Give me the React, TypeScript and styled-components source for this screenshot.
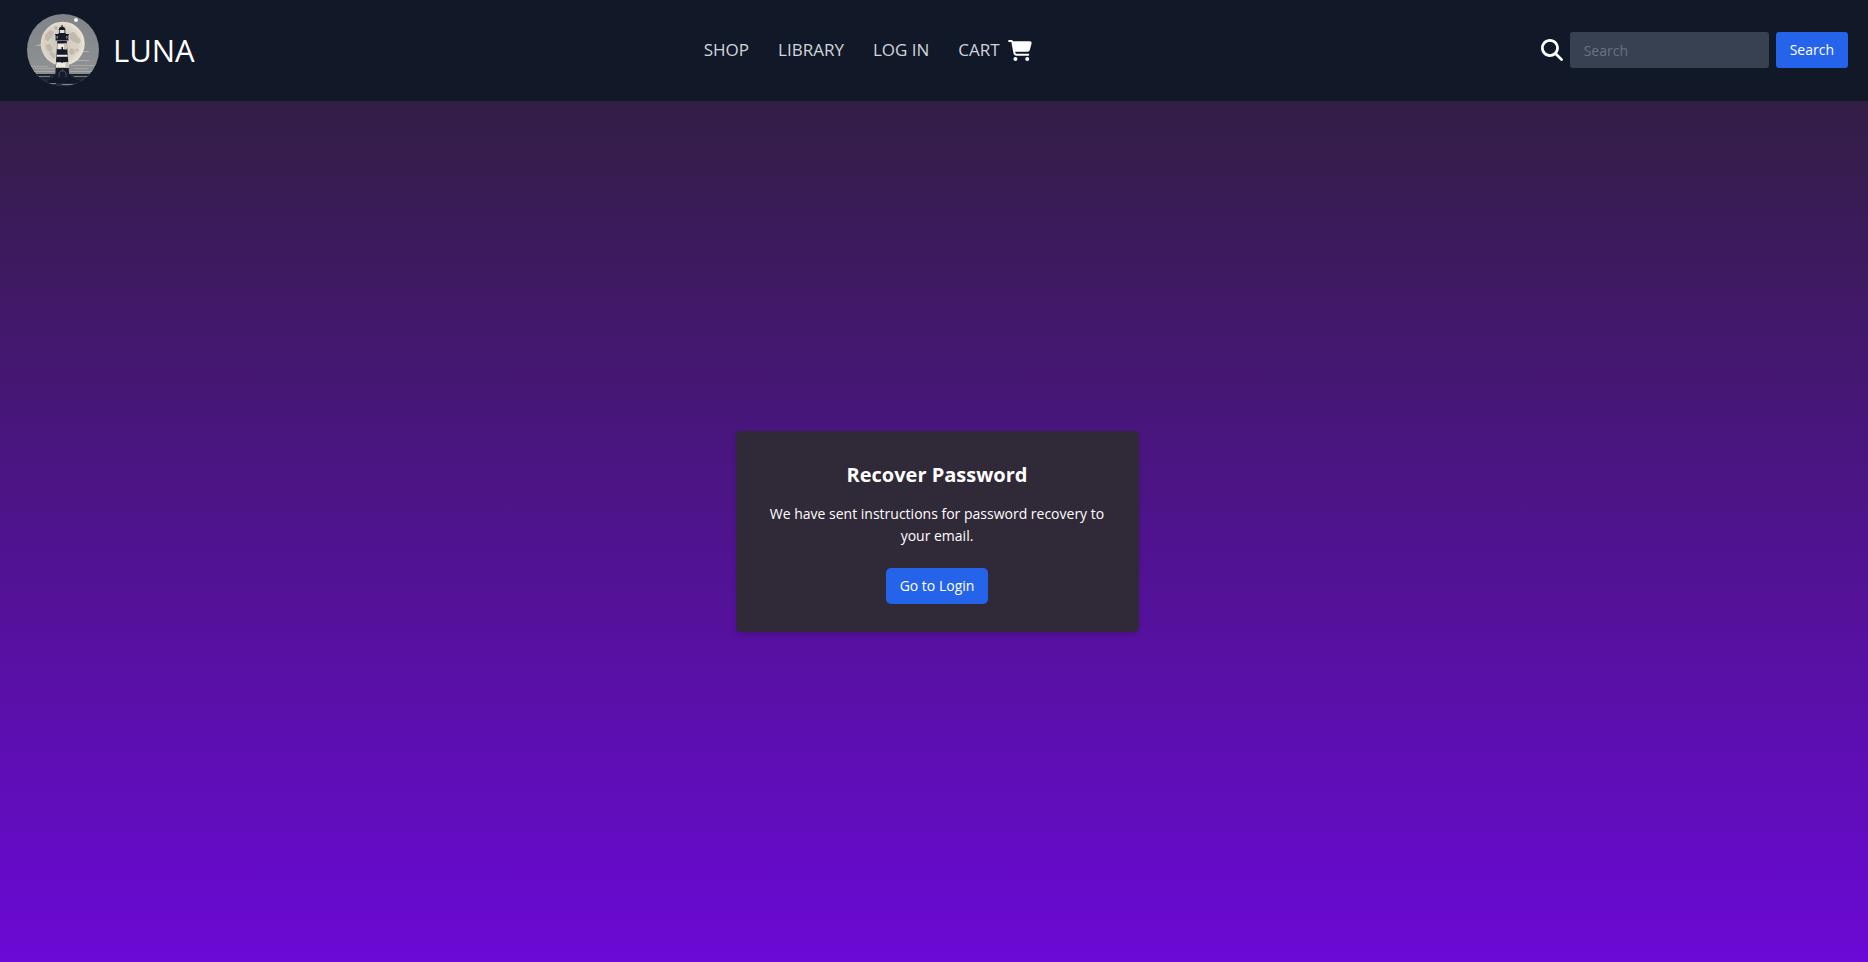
import React from "react";
import styled, { createGlobalStyle } from "styled-components";
import { FaMagnifyingGlass, FaCartShopping } from "react-icons/fa6";

const GlobalStyle = createGlobalStyle`
  *, *::before, *::after { box-sizing: border-box; }
  body {
    margin: 0;
    font-family: "Segoe UI", "Open Sans", "Noto Sans", sans-serif;
    font-size: 14px;
    line-height: 22px;
    color: #ffffff;
    background: #6b09d6;
  }
  h1, p { margin: 0; }
  a { color: inherit; text-decoration: none; }
  button, input { font: inherit; border: 0; }
`;

const Page = styled.div`
  display: flex;
  flex-direction: column;
  min-height: 100vh;
`;

const Header = styled.header`
  display: flex;
  align-items: center;
  justify-content: space-between;
  padding: 14px 20px 15px 27px;
  background: #111827;
`;

const Brand = styled.a`
  display: flex;
  align-items: center;
  gap: 14px;
  font-size: 31px;
  line-height: 36px;
`;

const Logo = styled.svg`
  display: block;
  width: 72px;
  height: 72px;
`;

const Nav = styled.nav`
  display: flex;
  align-items: center;
  gap: 29px;
`;

const NavLink = styled.a`
  display: flex;
  align-items: center;
  gap: 8px;
  font-size: 17px;
  line-height: 24px;
  color: #d1d5db;

  svg {
    width: 24px;
    height: 21px;
    color: #ffffff;
  }
`;

const SearchForm = styled.form`
  display: flex;
  align-items: center;
  gap: 7px;
`;

const SearchLabel = styled.label`
  display: flex;

  svg {
    width: 22px;
    height: 22px;
  }
`;

const SearchInput = styled.input`
  width: 199px;
  height: 36px;
  padding: 0 14px;
  border-radius: 3px;
  color: #ffffff;
  background: #374151;

  &::placeholder { color: #6b7280; opacity: 1; }
`;

const Button = styled.button<{ $radius: number }>`
  height: 36px;
  padding: 0 14px;
  border-radius: ${({ $radius }) => $radius}px;
  color: #ffffff;
  background: #2563eb;
  cursor: pointer;
`;

const Main = styled.main`
  flex: 1;
  display: flex;
  align-items: center;
  justify-content: center;
  padding: 28px 28px 28px 34px;
  background: linear-gradient(to bottom, #331e45, #6b09d6);
`;

const Card = styled.section`
  display: flex;
  flex-direction: column;
  align-items: center;
  width: 100%;
  max-width: 403px;
  padding: 28px;
  border-radius: 5px;
  text-align: center;
  background: #302938;
  box-shadow: 0 4px 6px -1px rgba(0, 0, 0, 0.1), 0 2px 4px -2px rgba(0, 0, 0, 0.1);
`;

const Title = styled.h1`
  margin-bottom: 12px;
  font-size: 20px;
  line-height: 32px;
  font-weight: 700;
`;

const Message = styled.p`
  margin-bottom: 21px;
`;

function Lighthouse() {
  return (
    <Logo viewBox="0 0 72 72" role="img" aria-label="Lighthouse in front of the moon">
      <defs>
        <clipPath id="disc"><circle cx="36" cy="36" r="36" /></clipPath>
        <linearGradient id="sky" x1="0" y1="0" x2="0" y2="1">
          <stop offset="0" stopColor="#7f8488" />
          <stop offset="0.8" stopColor="#8f9294" />
          <stop offset="1" stopColor="#6d7177" />
        </linearGradient>
        <radialGradient id="moon" cx="0.45" cy="0.5" r="0.58">
          <stop offset="0" stopColor="#cfc7bb" />
          <stop offset="0.7" stopColor="#dad3c6" />
          <stop offset="1" stopColor="#f2ecdd" />
        </radialGradient>
      </defs>
      <g clipPath="url(#disc)">
        <rect width="72" height="72" fill="url(#sky)" />
        <path d="M9 31h8v1H9zM12 30h6v1h-6zM53 37h9v1h-9zM50 46h12v1H50z" fill="#b3b1ab" />
        <circle cx="49" cy="6" r="2" fill="#f5f1e4" />
        <circle cx="35.7" cy="29.7" r="22" fill="url(#moon)" />
        <g fill="#b5aca1" opacity="0.65">
          <path d="M18 21l5-5 4 2-2 5-4 4-3-1zM18 31l5-1 3 4-2 5-4-3zM22 39l4-1 3 4-3 3z" />
          <path d="M42 19l5-1 4 5 3 3-2 4-5-2-4-3zM44 34l4 2-1 4-3 1-2-3z" />
          <circle cx="29" cy="14" r="2" />
          <circle cx="50" cy="36" r="1.5" />
        </g>
        <path d="M3 52h18v1H3zM8 54h19v1H8zM44 51h24v1H44zM47 54h14v1H47zM2 57h26v1H2zM43 57h24v1H43z" fill="#a9a7a2" />
        <rect y="60" width="72" height="12" fill="#232936" />
        <path d="M0 60h72v1H0zM0 64h30v1H0zM44 64h28v1H44z" fill="#171d2b" />
        <path d="M3 62h20v1H3zM47 62h21v1H47zM8 66h8v1H8zM57 66h8v1h-8z" fill="#767a80" />
        <path d="M20 67l6-3 2-3h15l3 3 8 3-2 2H22z" fill="#111827" />
        <path d="M18 69h11v1H18zM35 70h12v1H35z" fill="#7e8185" />
        <path d="M30.3 27h9.4l2.8 38H28z" fill="#151b2b" />
        <path d="M30.4 29.5h9.2l.4 5.8h-9.8zM29.8 40.8h10.8v2h-11zM29.3 48.3h12.2l.4 5.4H28.9z" fill="#f1ebdd" />
        <path d="M37 29.5h2.6l.4 5.8h-3zM38.5 48.3h3l.4 5.4h-3.4z" fill="#cbc2b6" />
        <path d="M34.5 33h1.5v3h-1.5zM34.5 46h1.2v3h-1.2z" fill="#151b2b" />
        <path d="M28 20h14v1h-.6v5.5H28.6V21H28z" fill="#151b2b" />
        <path d="M29.5 22h1.5v2.5h-1.5zM39 22h1.5v2.5H39z" fill="#827f7b" />
        <path d="M31.5 16l1-2.6 2-1V11h1v1.4l2 1 1.2 2.6z" fill="#111827" />
        <path d="M32.3 16h5.6v3h-5.6z" fill="#e6dfd0" />
        <path d="M32 16h.8v4H32zM37.5 16h.8v4h-.8zM31.5 19h7.3v2h-7.3z" fill="#151b2b" />
        <path d="M32 63v-4l2-2h3l2 2v4M35.5 57v-2" fill="none" stroke="#5d6168" strokeWidth="0.7" />
      </g>
    </Logo>
  );
}

export default function App() {
  return (
    <>
      <GlobalStyle />
      <Page>
        <Header>
          <Brand href="#home">
            <Lighthouse />
            LUNA
          </Brand>
          <Nav aria-label="Main">
            <NavLink href="#shop">SHOP</NavLink>
            <NavLink href="#library">LIBRARY</NavLink>
            <NavLink href="#login">LOG IN</NavLink>
            <NavLink href="#cart">
              CART
              <FaCartShopping aria-hidden />
            </NavLink>
          </Nav>
          <SearchForm role="search" onSubmit={(event) => event.preventDefault()}>
            <SearchLabel htmlFor="search" aria-label="Search">
              <FaMagnifyingGlass aria-hidden />
            </SearchLabel>
            <SearchInput id="search" type="text" placeholder="Search" />
            <Button type="submit" $radius={3}>Search</Button>
          </SearchForm>
        </Header>
        <Main>
          <Card>
            <Title>Recover Password</Title>
            <Message>We have sent instructions for password recovery to your email.</Message>
            <Button type="button" $radius={5}>Go to Login</Button>
          </Card>
        </Main>
      </Page>
    </>
  );
}
